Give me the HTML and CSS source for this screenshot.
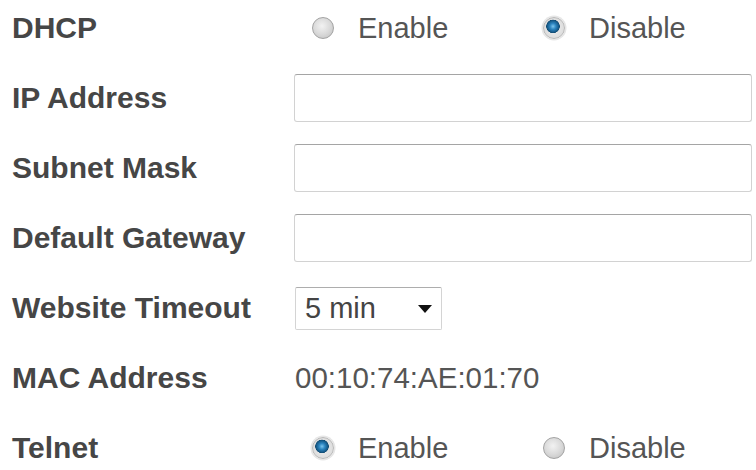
FILE: index.html
```html
<!DOCTYPE html>
<html>
<head>
<meta charset="UTF-8">
<title>Network Settings</title>
<link rel="stylesheet" href="styles.css">
</head>
<body>
  <form class="settings">
    <div class="row">
      <label class="label">DHCP</label>
      <div class="options">
        <label class="option"><input type="radio" name="dhcp" value="1"> Enable</label>
        <label class="option"><input type="radio" name="dhcp" value="0" checked> Disable</label>
      </div>
    </div>
    <div class="row">
      <label class="label" for="ip">IP Address</label>
      <input class="field" type="text" id="ip">
    </div>
    <div class="row">
      <label class="label" for="mask">Subnet Mask</label>
      <input class="field" type="text" id="mask">
    </div>
    <div class="row">
      <label class="label" for="gw">Default Gateway</label>
      <input class="field" type="text" id="gw">
    </div>
    <div class="row">
      <label class="label" for="timeout">Website Timeout</label>
      <span class="dropdown">
        <select id="timeout">
          <option>5 min</option>
          <option>10 min</option>
          <option>30 min</option>
        </select>
        <svg class="caret" width="14" height="8" viewBox="0 0 14 8"><path d="M0 0h14L7 8z" fill="#111"/></svg>
      </span>
    </div>
    <div class="row">
      <label class="label">MAC Address</label>
      <span class="value">00:10:74:AE:01:70</span>
    </div>
    <div class="row">
      <label class="label">Telnet</label>
      <div class="options">
        <label class="option"><input type="radio" name="telnet" value="1" checked> Enable</label>
        <label class="option"><input type="radio" name="telnet" value="0"> Disable</label>
      </div>
    </div>
  </form>
</body>
</html>
```

FILE: styles.css
```css
body {
    margin: 0;
    padding: 3px 0 0 12px;
    background: #fff;
    font-family: "Liberation Sans", Arial, sans-serif;
    font-size: 29px;
    color: #555;
}
.settings {
    display: flex;
    flex-direction: column;
    gap: 20px;
}
.row {
    display: flex;
    align-items: center;
    height: 50px;
}
.label {
    width: 282px;
    flex: none;
    font-size: 30px;
    font-weight: bold;
    color: #464646;
}
.value {
    font-size: 29.5px;
    color: #555;
    margin-left: 1px;
}
.field {
    width: 458px;
    height: 48px;
    box-sizing: border-box;
    border: 1px solid #d2d2d2;
    border-top-color: #a5a5a5;
    border-radius: 3px;
    background: #fff;
    font: inherit;
    padding: 0 8px;
    margin: 0;
}
.options {
    display: flex;
    padding-left: 18px;
}
.option {
    width: 231px;
    display: flex;
    align-items: center;
    gap: 24px;
    color: #555;
}
.option input {
    -webkit-appearance: none;
    appearance: none;
    width: 22px;
    height: 22px;
    margin: 0;
    border-radius: 50%;
    border: 1px solid #a3a3a3;
    background: radial-gradient(circle at 45% 40%, #f2f2f2 0, #dadada 50%, #bdbdbd 100%);
    box-sizing: border-box;
}
.option input:checked {
    border-color: #b9b9b9;
    background:
        radial-gradient(circle at 45% 42%, #7cc6ee 0, #2b84bf 3px, #145683 6px, #10496f 6.5px, transparent 7px),
        radial-gradient(circle, #f0f0f0 0, #d6d6d6 100%);
    box-shadow: 0 0 0 1.5px #e6e6e6;
}
.dropdown {
    position: relative;
    display: inline-block;
    margin-left: 1px;
}
.dropdown select {
    -webkit-appearance: none;
    appearance: none;
    width: 147px;
    height: 43px;
    border: 1px solid #d4d4d4;
    border-top-color: #adadad;
    border-radius: 2px;
    background: #fff;
    font: inherit;
    color: #444;
    padding: 0 0 0 9px;
    margin: 0;
}
.caret {
    position: absolute;
    left: 123px;
    top: 18px;
    pointer-events: none;
}
```
